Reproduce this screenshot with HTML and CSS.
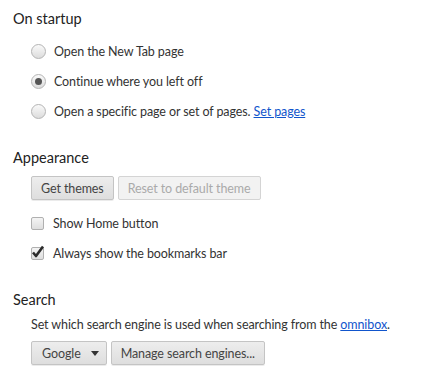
FILE: index.html
```html
<!DOCTYPE html>
<html lang="en">
<head>
  <meta charset="UTF-8">
  <title>Settings</title>
  <link rel="stylesheet" href="styles.css">
</head>
<body>
  <section class="section">
    <h3>On startup</h3>
    <div class="content">
      <label class="row"><span class="radio"></span>Open the New Tab page</label>
      <label class="row"><span class="radio checked"></span>Continue where you left off</label>
      <label class="row"><span class="radio"></span>Open a specific page or set of pages.&nbsp;<a href="#">Set pages</a></label>
    </div>
  </section>

  <section class="section">
    <h3>Appearance</h3>
    <div class="content">
      <div class="buttons">
        <button type="button">Get themes</button>
        <button type="button" disabled>Reset to default theme</button>
      </div>
      <label class="row"><span class="checkbox"></span>Show Home button</label>
      <label class="row">
        <span class="checkbox">
          <svg class="tick" width="14" height="14" viewBox="0 0 14 14"><path d="M2 7.5 L5 11 L12 1.5" fill="none" stroke="#2b2b2b" stroke-width="2.6" stroke-linejoin="round"/></svg>
        </span>Always show the bookmarks bar
      </label>
    </div>
  </section>

  <section class="section">
    <h3>Search</h3>
    <div class="content">
      <p class="desc">Set which search engine is used when searching from the <a href="#">omnibox</a>.</p>
      <div class="buttons search-buttons">
        <button type="button" class="select">Google<span class="arrow"></span></button>
        <button type="button">Manage search engines...</button>
      </div>
    </div>
  </section>
</body>
</html>
```

FILE: styles.css
```css
* {
  margin: 0;
  padding: 0;
  box-sizing: border-box;
}

body {
  font-family: Lato, "Open Sans", sans-serif;
  font-size: 12.5px;
  letter-spacing: -0.1px;
  color: #333;
  background-color: #fff;
  padding: 8px 13px 0;
}

h3 {
  font-size: 14.5px;
  font-weight: normal;
  letter-spacing: 0;
  color: #222;
  height: 22px;
  line-height: 22px;
}

.section {
  margin-bottom: 21px;
}

.content {
  padding-left: 18px;
  display: flex;
  flex-direction: column;
}

.section:first-child .content {
  margin-top: 6px;
}

.row {
  display: flex;
  align-items: center;
  height: 30px;
}

.radio {
  width: 15px;
  height: 15px;
  border: 1px solid #b4b4b4;
  border-radius: 50%;
  background: linear-gradient(#fafafa, #dcdcdc);
  margin-right: 8px;
  display: flex;
  align-items: center;
  justify-content: center;
}

.radio.checked::after {
  content: "";
  width: 7px;
  height: 7px;
  border-radius: 50%;
  background: #555;
}

.checkbox {
  position: relative;
  width: 13px;
  height: 13px;
  border: 1px solid #b0b0b0;
  border-radius: 2px;
  background: linear-gradient(#f4f4f4, #dedede);
  margin-right: 9px;
}

.tick {
  position: absolute;
  left: -1px;
  top: -3px;
}

a {
  color: #15c;
}

.buttons {
  display: flex;
  gap: 4px;
  margin: 7px 0 8px;
}

.search-buttons {
  margin-top: 5px;
}

button {
  font-family: inherit;
  font-size: 12.5px;
  letter-spacing: -0.1px;
  color: #444;
  height: 24px;
  padding: 0 9px;
  border: 1px solid #c4c4c4;
  border-radius: 2px;
  background: linear-gradient(#ededed, #dedede);
  box-shadow: 0 1px 0 rgba(0, 0, 0, 0.08);
}

button:disabled {
  color: #aaa;
  background: #f2f2f2;
  border-color: #d4d4d4;
  box-shadow: none;
}

.select {
  display: flex;
  align-items: center;
  gap: 10px;
  padding: 0 7px 0 10px;
}

.arrow {
  width: 0;
  height: 0;
  border-left: 4px solid transparent;
  border-right: 4px solid transparent;
  border-top: 5px solid #333;
}

.desc {
  margin-top: 3px;
  height: 22px;
  line-height: 22px;
}
```
